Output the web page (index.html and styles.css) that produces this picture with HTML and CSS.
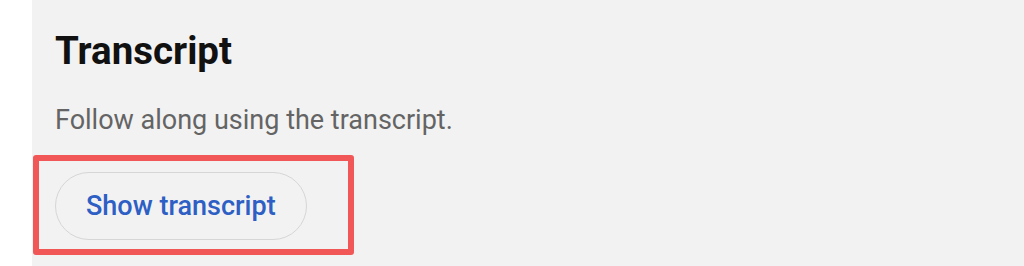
FILE: index.html
```html
<!DOCTYPE html>
<html lang="en">
<head>
    <meta charset="UTF-8">
    <title>Transcript</title>
    <link rel="stylesheet" href="styles.css">
</head>
<body>
    <div class="panel">
        <h2>Transcript</h2>
        <p class="lead">Follow along using the transcript.</p>
        <div class="highlight">
            <button class="pill-btn">Show transcript</button>
        </div>
    </div>
</body>
</html>
```

FILE: styles.css
```css
body {
    margin: 0;
    background: #fff;
    font-family: Roboto, "Liberation Sans", Arial, sans-serif;
}
.panel {
    margin-left: 32px;
    height: 266px;
    background: #f2f2f2;
    padding: 28px 0 0 23px;
    box-sizing: border-box;
}
h2 {
    margin: 0;
    font-size: 38.5px;
    font-weight: 700;
    line-height: 46px;
    color: #111;
}
.lead {
    margin: 30px 0 0;
    font-size: 27px;
    line-height: 32px;
    color: #646464;
}
.highlight {
    position: relative;
    margin-top: 36px;
}
.highlight::before {
    content: "";
    position: absolute;
    left: -22px;
    top: -17px;
    width: 321px;
    height: 100px;
    border: 6px solid #f25757;
    border-radius: 3px;
    box-sizing: border-box;
}
.pill-btn {
    height: 68px;
    padding: 0 30px;
    background: #f2f2f2;
    border: 1.5px solid #d6d6d6;
    border-radius: 34px;
    font-family: inherit;
    font-size: 27px;
    font-weight: 500;
    color: #2d5fc4;
    cursor: pointer;
}
```
